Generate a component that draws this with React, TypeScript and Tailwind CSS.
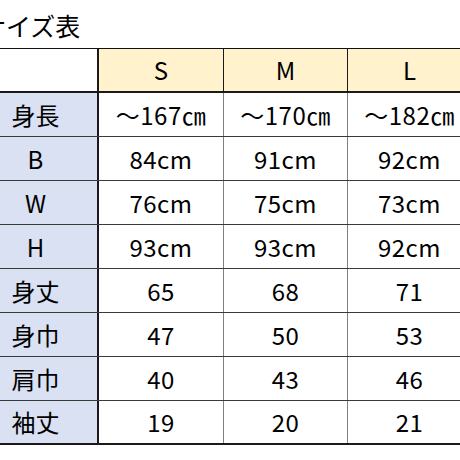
import React from "react";

const sizes = ["S", "M", "L"];
const rows: [string, string[]][] = [
  ["身長", ["～167㎝", "～170㎝", "～182㎝"]],
  ["B", ["84cm", "91cm", "92cm"]],
  ["W", ["76cm", "75cm", "73cm"]],
  ["H", ["93cm", "93cm", "92cm"]],
  ["身丈", ["65", "68", "71"]],
  ["身巾", ["47", "50", "53"]],
  ["肩巾", ["40", "43", "46"]],
  ["袖丈", ["19", "20", "21"]],
];

const widths = ["w-[125px]", "w-[125px]", "w-[124px]", "w-[124px]"];

export default function App() {
  return (
    <div
      className="w-[460px] h-[460px] overflow-hidden bg-white text-black"
      style={{ fontFamily: '"Noto Sans CJK JP", "Noto Sans", sans-serif' }}
    >
      <div className="h-[48px] pt-[13px] -ml-[19px] text-[25px] leading-[25px] whitespace-nowrap">
        サイズ表
      </div>
      <div className="-ml-[26px] w-[498px] border-t border-[#111]">
        <div className="flex h-[44px] border-b-2 border-[#1a1a1a]">
          <div className={`${widths[0]} shrink-0 bg-white border-r-2 border-[#1a1a1a]`} />
          {sizes.map((s, i) => (
            <div
              key={s}
              className={`${widths[i + 1]} shrink-0 bg-[#FFF2CC] border-r border-[#1a1a1a] flex items-center justify-center text-[24px] leading-none`}
            >
              {s}
            </div>
          ))}
        </div>
        {rows.map(([label, vals], r) => (
          <div
            key={label}
            className={`flex h-[44px] ${
              r === rows.length - 1 ? "border-b-2 border-[#1a1a1a]" : "border-b border-[#3a3a3a]"
            }`}
          >
            <div
              className={`${widths[0]} shrink-0 bg-[#D9E1F2] border-r-2 border-[#1a1a1a] flex items-center justify-center text-[24px] leading-none`}
            >
              {label}
            </div>
            {vals.map((v, i) => (
              <div
                key={i}
                className={`${widths[i + 1]} shrink-0 bg-white border-r border-[#7f7f7f] flex items-center justify-center text-[24px] leading-none tracking-[0.5px]`}
              >
                {v}
              </div>
            ))}
          </div>
        ))}
      </div>
    </div>
  );
}
